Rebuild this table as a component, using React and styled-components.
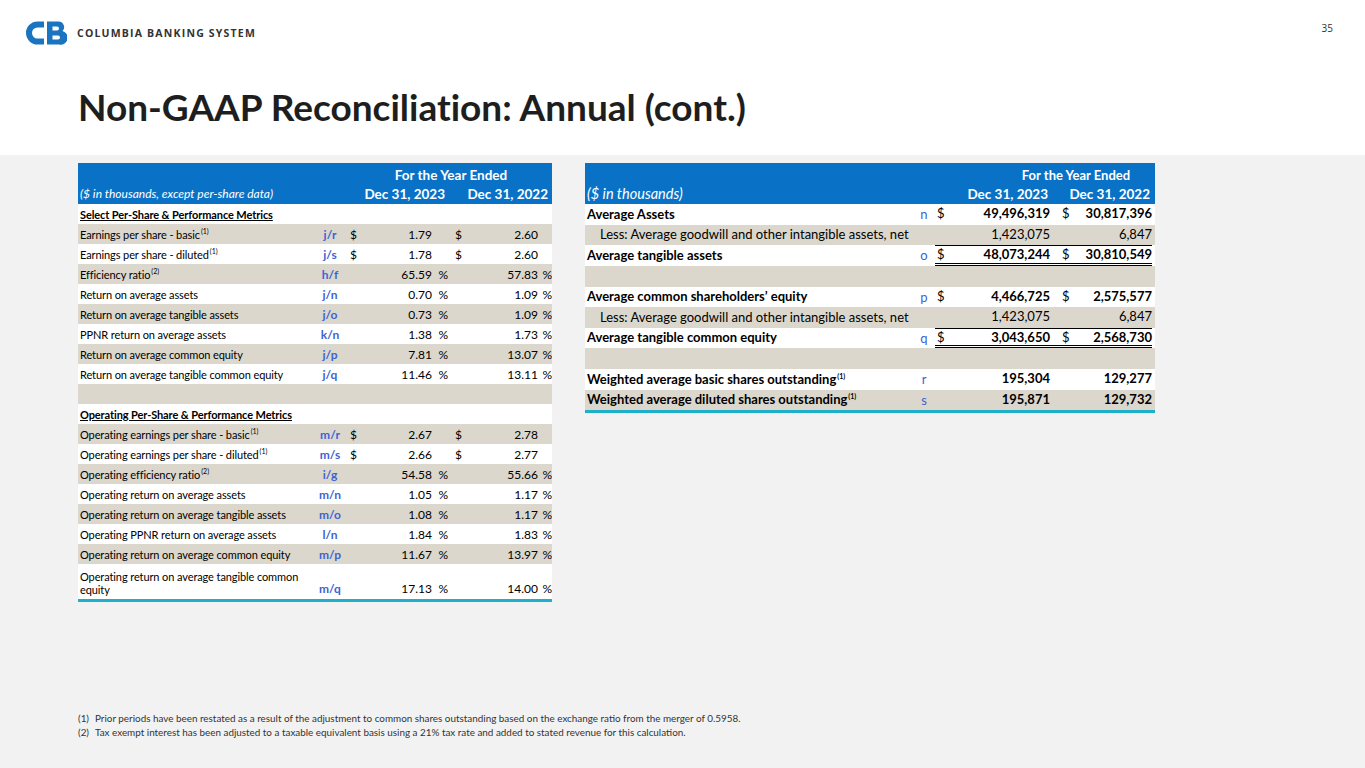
import React from 'react';
import styled, { createGlobalStyle } from 'styled-components';

const GlobalStyle = createGlobalStyle`
  html, body {
    margin: 0;
    padding: 0;
    background: #f2f2f2;
  }
  body {
    font-family: Lato, "Open Sans", sans-serif;
    color: #000;
  }
`;

const BLUE = '#0a72c6';
const STRIPE = '#dbd7cd';
const CODE = '#3d63d3';
const TEAL = '#1db0c8';

const leftRows = [
  { section: true, label: 'Select Per-Share & Performance Metrics' },
  { label: 'Earnings per share - basic', note: 1, code: 'j/r', d: true, v1: '1.79', v2: '2.60' },
  { label: 'Earnings per share - diluted', note: 1, code: 'j/s', d: true, v1: '1.78', v2: '2.60' },
  { label: 'Efficiency ratio', note: 2, code: 'h/f', v1: '65.59', v2: '57.83', pct: true },
  { label: 'Return on average assets', code: 'j/n', v1: '0.70', v2: '1.09', pct: true },
  { label: 'Return on average tangible assets', code: 'j/o', v1: '0.73', v2: '1.09', pct: true },
  { label: 'PPNR return on average assets', code: 'k/n', v1: '1.38', v2: '1.73', pct: true },
  { label: 'Return on average common equity', code: 'j/p', v1: '7.81', v2: '13.07', pct: true },
  { label: 'Return on average tangible common equity', code: 'j/q', v1: '11.46', v2: '13.11', pct: true },
  { blank: true },
  { section: true, label: 'Operating Per-Share & Performance Metrics' },
  { label: 'Operating earnings per share - basic', note: 1, code: 'm/r', d: true, v1: '2.67', v2: '2.78' },
  { label: 'Operating earnings per share - diluted', note: 1, code: 'm/s', d: true, v1: '2.66', v2: '2.77' },
  { label: 'Operating efficiency ratio', note: 2, code: 'i/g', v1: '54.58', v2: '55.66', pct: true },
  { label: 'Operating return on average assets', code: 'm/n', v1: '1.05', v2: '1.17', pct: true },
  { label: 'Operating return on average tangible assets', code: 'm/o', v1: '1.08', v2: '1.17', pct: true },
  { label: 'Operating PPNR return on average assets', code: 'l/n', v1: '1.84', v2: '1.83', pct: true },
  { label: 'Operating return on average common equity', code: 'm/p', v1: '11.67', v2: '13.97', pct: true },
  { label: ['Operating return on average tangible common', 'equity'], code: 'm/q', v1: '17.13', v2: '14.00', pct: true, tall: true },
];

const rightRows = [
  { label: 'Average Assets', bold: true, code: 'n', d: true, v1: '49,496,319', v2: '30,817,396' },
  { label: 'Less: Average goodwill and other intangible assets, net', indent: true, v1: '1,423,075', v2: '6,847' },
  { label: 'Average tangible assets', bold: true, code: 'o', d: true, v1: '48,073,244', v2: '30,810,549', total: true },
  { blank: true },
  { label: 'Average common shareholders\u2019 equity', bold: true, code: 'p', d: true, v1: '4,466,725', v2: '2,575,577' },
  { label: 'Less: Average goodwill and other intangible assets, net', indent: true, v1: '1,423,075', v2: '6,847' },
  { label: 'Average tangible common equity', bold: true, code: 'q', d: true, v1: '3,043,650', v2: '2,568,730', total: true },
  { blank: true },
  { label: 'Weighted average basic shares outstanding', note: 1, bold: true, code: 'r', v1: '195,304', v2: '129,277' },
  { label: 'Weighted average diluted shares outstanding', note: 1, bold: true, code: 's', v1: '195,871', v2: '129,732' },
];

const Slide = styled.div`
  width: 1365px;
  height: 768px;
  display: flex;
  flex-direction: column;
  overflow: hidden;
`;

const Top = styled.header`
  height: 155px;
  background: #fff;
  padding: 20px 32px 0 25px;
  box-sizing: border-box;
  display: flex;
  flex-direction: column;
`;

const Brand = styled.div`
  display: flex;
  align-items: center;
  gap: 10px;
  height: 26px;
`;

const BrandName = styled.span`
  font-family: "Open Sans", sans-serif;
  font-weight: 700;
  font-size: 10.5px;
  letter-spacing: 1.2px;
  color: #333;
`;

const PageNo = styled.span`
  margin-left: auto;
  align-self: flex-start;
  margin-top: 1px;
  font-family: "Open Sans", sans-serif;
  font-size: 10px;
  color: #333;
`;

const Title = styled.h1`
  margin: 40px 0 0 53px;
  font-size: 37px;
  line-height: 42px;
  font-weight: 700;
  color: #1e1e1e;
  font-variant-ligatures: none;
`;

const Body = styled.main`
  flex: 1;
  display: flex;
  flex-direction: column;
  padding: 8px 0 29px 78px;
`;

const Tables = styled.div`
  display: flex;
  align-items: flex-start;
  gap: 33px;
`;

const Table = styled.div`
  width: ${(p) => p.width}px;
  border-bottom: 3px solid ${TEAL};
`;

const Head = styled.div`
  background: ${BLUE};
  color: #fff;
`;

const HeadTop = styled.div`
  display: flex;
  justify-content: flex-end;
  height: 20px;
  align-items: flex-end;
`;

const Span = styled.div`
  width: ${(p) => p.width}px;
  margin-right: ${(p) => p.mr || 0}px;
  text-align: center;
  font-weight: 700;
  font-size: ${(p) => p.size || 13.5}px;
  white-space: nowrap;
`;

const LeftGrid = styled.div`
  display: grid;
  grid-template-columns: minmax(0, 1fr) 40px 16px 66px 16px 22px 68px 14px;
  align-items: ${(p) => (p.tall ? 'end' : 'center')};
  height: ${(p) => p.h}px;
  background: ${(p) => (p.stripe ? STRIPE : '#fff')};
  font-size: 12px;
  padding-bottom: ${(p) => (p.tall ? 3 : 0)}px;
  box-sizing: border-box;
`;

const HeadGrid = styled(LeftGrid)`
  background: transparent;
  align-items: center;
`;

const Label = styled.div`
  padding-left: ${(p) => (p.indent ? 15 : 2)}px;
  font-weight: ${(p) => (p.bold ? 700 : 400)};
  text-decoration: ${(p) => (p.under ? 'underline' : 'none')};
  font-size: ${(p) => p.size || 13}px;
  letter-spacing: ${(p) => p.ls || 0}px;
  white-space: nowrap;
  line-height: 13px;
`;

const Code = styled.div`
  text-align: center;
  color: ${CODE};
  font-weight: ${(p) => (p.light ? 400 : 700)};
`;

const Dollar = styled.div`
  padding-left: ${(p) => p.pl || 0}px;
`;

const Num = styled.div`
  text-align: right;
  font-weight: ${(p) => (p.bold ? 700 : 400)};
  white-space: nowrap;
`;

const Pct = styled.div`
  text-align: right;
`;

const DateHead = styled.div`
  grid-column: ${(p) => p.col};
  text-align: right;
  font-weight: 700;
  font-size: 13.5px;
  padding-right: ${(p) => p.pr || 0}px;
  white-space: nowrap;
`;

const HeadLabel = styled.div`
  grid-column: 1;
  font-style: italic;
  font-size: ${(p) => p.size}px;
  padding-left: 2px;
  white-space: nowrap;
`;

const Sup = styled.sup`
  font-size: 7px;
  line-height: 0;
  vertical-align: 5px;
  margin-left: 1px;
  letter-spacing: 0;
`;

const RightRow = styled.div`
  display: grid;
  grid-template-columns: minmax(0, 1fr) 22px 220px;
  align-items: center;
  height: ${(p) => p.h}px;
  background: ${(p) => (p.stripe ? STRIPE : '#fff')};
  font-size: 13px;
`;

const Amounts = styled.div`
  display: grid;
  grid-template-columns: 17px 98px 26px 76px;
  align-self: stretch;
  align-items: center;
  margin-right: 3px;
  border-top: ${(p) => (p.total ? '1px solid #000' : '1px solid transparent')};
  border-bottom: ${(p) => (p.total ? '3px double #000' : '3px solid transparent')};
  box-sizing: border-box;
`;

const RightHeadGrid = styled.div`
  display: grid;
  grid-template-columns: minmax(0, 1fr) 22px 17px 98px 26px 76px;
  align-items: center;
  height: 21px;
  margin-right: 5px;
`;

const Notes = styled.footer`
  margin-top: auto;
  font-size: 9.9px;
  line-height: 14px;
  color: #333;
`;

const Note = styled.div`
  display: flex;
`;

const NoteNo = styled.span`
  width: 17px;
  flex: none;
`;

function Logo() {
  return (
    <svg width="42" height="26" viewBox="0 0 42 26">
      <path d="M19 4.5 H12.5 A8.5 8.5 0 0 0 12.5 21.5 H19" fill="none" stroke="#1b74bf" strokeWidth="6" />
      <path
        fillRule="evenodd"
        fill="#1b74bf"
        d="M22 1.5 H33 A5.6 5.6 0 0 1 37.5 11 A6.4 6.4 0 0 1 34 24.5 H22 Z M27.5 6.5 V10.5 H32 A2 2 0 0 0 32 6.5 Z M27.5 15.5 V19.5 H33 A2 2 0 0 0 33 15.5 Z"
      />
    </svg>
  );
}

function LeftTable() {
  return (
    <Table width={474}>
      <Head>
        <HeadTop>
          <Span width={202}>For the Year Ended</Span>
        </HeadTop>
        <HeadGrid h={21}>
          <HeadLabel size={12}>($ in thousands, except per-share data)</HeadLabel>
          <DateHead col="3 / 6" pr={3}>Dec 31, 2023</DateHead>
          <DateHead col="6 / 9" pr={4}>Dec 31, 2022</DateHead>
        </HeadGrid>
      </Head>
      {leftRows.map((r, i) => {
        const stripe = i % 2 === 1;
        if (r.blank) return <LeftGrid key={i} h={20} stripe={stripe} />;
        if (r.section)
          return (
            <LeftGrid key={i} h={20} stripe={stripe}>
              <Label bold under size={11} ls={-0.1}>{r.label}</Label>
            </LeftGrid>
          );
        return (
          <LeftGrid key={i} h={r.tall ? 35 : 20} stripe={stripe} tall={r.tall}>
            <Label size={11} ls={-0.1}>
              {Array.isArray(r.label) ? (
                <>
                  {r.label[0]}
                  <br />
                  {r.label[1]}
                </>
              ) : (
                r.label
              )}
              {r.note && <Sup>({r.note})</Sup>}
            </Label>
            <Code>{r.code}</Code>
            <Dollar>{r.d ? '$' : ''}</Dollar>
            <Num>{r.v1}</Num>
            <Pct>{r.pct ? '%' : ''}</Pct>
            <Dollar pl={7}>{r.d ? '$' : ''}</Dollar>
            <Num>{r.v2}</Num>
            <Pct>{r.pct ? '%' : ''}</Pct>
          </LeftGrid>
        );
      })}
    </Table>
  );
}

function RightTable() {
  return (
    <Table width={570}>
      <Head>
        <HeadTop>
          <Span width={152} mr={3} size={13}>For the Year Ended</Span>
        </HeadTop>
        <RightHeadGrid>
          <HeadLabel size={14.5}>($ in thousands)</HeadLabel>
          <DateHead col="3 / 5">Dec 31, 2023</DateHead>
          <DateHead col="5 / 7">Dec 31, 2022</DateHead>
        </RightHeadGrid>
      </Head>
      {rightRows.map((r, i) => {
        const stripe = i % 2 === 1;
        if (r.blank) return <RightRow key={i} h={21} stripe={stripe} />;
        return (
          <RightRow key={i} h={20.5} stripe={stripe}>
            <Label bold={r.bold} indent={r.indent}>
              {r.label}
              {r.note && <Sup>({r.note})</Sup>}
            </Label>
            <Code light>{r.code || ''}</Code>
            <Amounts total={r.total}>
              <Dollar pl={2}>{r.d ? '$' : ''}</Dollar>
              <Num bold={r.bold}>{r.v1}</Num>
              <Dollar pl={12}>{r.d ? '$' : ''}</Dollar>
              <Num bold={r.bold}>{r.v2}</Num>
            </Amounts>
          </RightRow>
        );
      })}
    </Table>
  );
}

export default function App() {
  return (
    <>
      <GlobalStyle />
      <Slide>
        <Top>
          <Brand>
            <Logo />
            <BrandName>COLUMBIA BANKING SYSTEM</BrandName>
            <PageNo>35</PageNo>
          </Brand>
          <Title>Non-GAAP Reconciliation: Annual (cont.)</Title>
        </Top>
        <Body>
          <Tables>
            <LeftTable />
            <RightTable />
          </Tables>
          <Notes>
            <Note>
              <NoteNo>(1)</NoteNo>
              Prior periods have been restated as a result of the adjustment to common shares outstanding based on the exchange ratio from the merger of 0.5958.
            </Note>
            <Note>
              <NoteNo>(2)</NoteNo>
              Tax exempt interest has been adjusted to a taxable equivalent basis using a 21% tax rate and added to stated revenue for this calculation.
            </Note>
          </Notes>
        </Body>
      </Slide>
    </>
  );
}
